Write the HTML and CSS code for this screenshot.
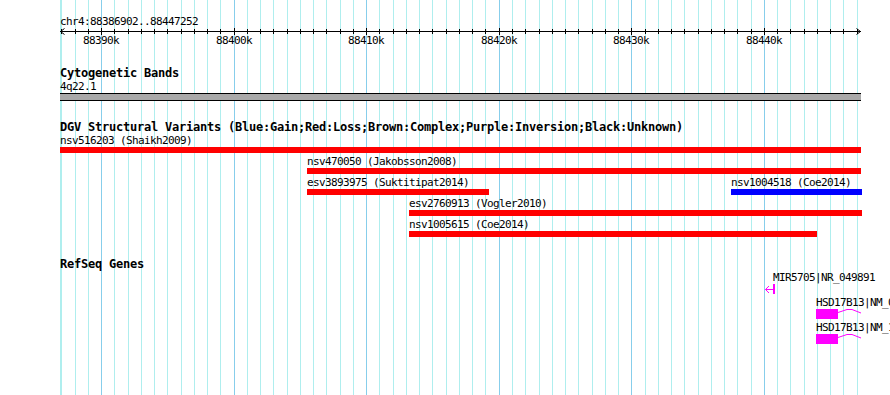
FILE: index.html
```html
<!DOCTYPE html>
<html lang="en">
<head>
<meta charset="utf-8">
<title>GBrowse details</title>
<link rel="stylesheet" href="styles.css">
</head>
<body>
<div class="panel">
  <svg class="grid" width="890" height="395" viewBox="0 0 890 395">
    <g class="minor">
      <rect x="60" width="1" height="395"/><rect x="61" width="1" height="395"/><rect x="75" width="1" height="395"/><rect x="88" width="1" height="395"/>
      <rect x="114" width="1" height="395"/><rect x="128" width="1" height="395"/><rect x="141" width="1" height="395"/><rect x="154" width="1" height="395"/><rect x="167" width="1" height="395"/><rect x="181" width="1" height="395"/><rect x="194" width="1" height="395"/><rect x="207" width="1" height="395"/><rect x="220" width="1" height="395"/>
      <rect x="247" width="1" height="395"/><rect x="260" width="1" height="395"/><rect x="273" width="1" height="395"/><rect x="287" width="1" height="395"/><rect x="300" width="1" height="395"/><rect x="313" width="1" height="395"/><rect x="326" width="1" height="395"/><rect x="340" width="1" height="395"/><rect x="353" width="1" height="395"/>
      <rect x="379" width="1" height="395"/><rect x="393" width="1" height="395"/><rect x="406" width="1" height="395"/><rect x="419" width="1" height="395"/><rect x="432" width="1" height="395"/><rect x="446" width="1" height="395"/><rect x="459" width="1" height="395"/><rect x="472" width="1" height="395"/><rect x="485" width="1" height="395"/>
      <rect x="512" width="1" height="395"/><rect x="525" width="1" height="395"/><rect x="539" width="1" height="395"/><rect x="552" width="1" height="395"/><rect x="565" width="1" height="395"/><rect x="578" width="1" height="395"/><rect x="592" width="1" height="395"/><rect x="605" width="1" height="395"/><rect x="618" width="1" height="395"/>
      <rect x="645" width="1" height="395"/><rect x="658" width="1" height="395"/><rect x="671" width="1" height="395"/><rect x="684" width="1" height="395"/><rect x="698" width="1" height="395"/><rect x="711" width="1" height="395"/><rect x="724" width="1" height="395"/><rect x="737" width="1" height="395"/><rect x="751" width="1" height="395"/>
      <rect x="777" width="1" height="395"/><rect x="790" width="1" height="395"/><rect x="804" width="1" height="395"/><rect x="817" width="1" height="395"/><rect x="830" width="1" height="395"/><rect x="843" width="1" height="395"/><rect x="857" width="1" height="395"/>
    </g>
    <g class="major">
      <rect x="101" width="1" height="395"/><rect x="234" width="1" height="395"/><rect x="366" width="1" height="395"/><rect x="499" width="1" height="395"/><rect x="631" width="1" height="395"/><rect x="764" width="1" height="395"/>
    </g>
  </svg>

  <div class="ruler">
    <div class="seg">chr4:88386902..88447252</div>
    <div class="scale">
      <svg class="scale-svg" width="890" height="8" viewBox="0 0 890 8">
        <g class="ticks">
          <rect x="60" y="3" width="801" height="1"/>
          <rect x="61" y="1" width="1" height="5"/><rect x="75" y="1" width="1" height="5"/><rect x="88" y="1" width="1" height="5"/>
          <rect x="114" y="1" width="1" height="5"/><rect x="128" y="1" width="1" height="5"/><rect x="141" y="1" width="1" height="5"/><rect x="154" y="1" width="1" height="5"/><rect x="167" y="1" width="1" height="5"/><rect x="181" y="1" width="1" height="5"/><rect x="194" y="1" width="1" height="5"/><rect x="207" y="1" width="1" height="5"/><rect x="220" y="1" width="1" height="5"/>
          <rect x="247" y="1" width="1" height="5"/><rect x="260" y="1" width="1" height="5"/><rect x="273" y="1" width="1" height="5"/><rect x="287" y="1" width="1" height="5"/><rect x="300" y="1" width="1" height="5"/><rect x="313" y="1" width="1" height="5"/><rect x="326" y="1" width="1" height="5"/><rect x="340" y="1" width="1" height="5"/><rect x="353" y="1" width="1" height="5"/>
          <rect x="379" y="1" width="1" height="5"/><rect x="393" y="1" width="1" height="5"/><rect x="406" y="1" width="1" height="5"/><rect x="419" y="1" width="1" height="5"/><rect x="432" y="1" width="1" height="5"/><rect x="446" y="1" width="1" height="5"/><rect x="459" y="1" width="1" height="5"/><rect x="472" y="1" width="1" height="5"/><rect x="485" y="1" width="1" height="5"/>
          <rect x="512" y="1" width="1" height="5"/><rect x="525" y="1" width="1" height="5"/><rect x="539" y="1" width="1" height="5"/><rect x="552" y="1" width="1" height="5"/><rect x="565" y="1" width="1" height="5"/><rect x="578" y="1" width="1" height="5"/><rect x="592" y="1" width="1" height="5"/><rect x="605" y="1" width="1" height="5"/><rect x="618" y="1" width="1" height="5"/>
          <rect x="645" y="1" width="1" height="5"/><rect x="658" y="1" width="1" height="5"/><rect x="671" y="1" width="1" height="5"/><rect x="684" y="1" width="1" height="5"/><rect x="698" y="1" width="1" height="5"/><rect x="711" y="1" width="1" height="5"/><rect x="724" y="1" width="1" height="5"/><rect x="737" y="1" width="1" height="5"/><rect x="751" y="1" width="1" height="5"/>
          <rect x="777" y="1" width="1" height="5"/><rect x="790" y="1" width="1" height="5"/><rect x="804" y="1" width="1" height="5"/><rect x="817" y="1" width="1" height="5"/><rect x="830" y="1" width="1" height="5"/><rect x="843" y="1" width="1" height="5"/><rect x="857" y="1" width="1" height="5"/>
          <rect x="101" y="0" width="1" height="7"/><rect x="234" y="0" width="1" height="7"/><rect x="366" y="0" width="1" height="7"/><rect x="499" y="0" width="1" height="7"/><rect x="631" y="0" width="1" height="7"/><rect x="764" y="0" width="1" height="7"/>
        </g>
        <path class="arrow" d="M64.5,0.5 L60.5,3.5 L64.5,6.5 M856.5,0.5 L860.5,3.5 L856.5,6.5"/>
      </svg>
      <span class="tick" style="left:83px">88390k</span>
      <span class="tick" style="left:216px">88400k</span>
      <span class="tick" style="left:348px">88410k</span>
      <span class="tick" style="left:481px">88420k</span>
      <span class="tick" style="left:613px">88430k</span>
      <span class="tick" style="left:746px">88440k</span>
    </div>
  </div>

  <section class="track">
    <div class="title">Cytogenetic Bands</div>
    <div class="seg">4q22.1</div>
    <div class="band"></div>
  </section>

  <section class="track">
    <div class="title">DGV Structural Variants (Blue:Gain;Red:Loss;Brown:Complex;Purple:Inversion;Black:Unknown)</div>
    <div class="lane">
      <div class="feat" style="left:60px"><div class="flabel">nsv516203 (Shaikh2009)</div><div class="bar loss" style="width:801px"></div></div>
    </div>
    <div class="lane">
      <div class="feat" style="left:307px"><div class="flabel">nsv470050 (Jakobsson2008)</div><div class="bar loss" style="width:554px"></div></div>
    </div>
    <div class="lane">
      <div class="feat" style="left:307px"><div class="flabel">esv3893975 (Suktitipat2014)</div><div class="bar loss" style="width:182px"></div></div>
      <div class="feat" style="left:731px"><div class="flabel">nsv1004518 (Coe2014)</div><div class="bar gain" style="width:131px"></div></div>
    </div>
    <div class="lane">
      <div class="feat" style="left:409px"><div class="flabel">esv2760913 (Vogler2010)</div><div class="bar loss" style="width:453px"></div></div>
    </div>
    <div class="lane">
      <div class="feat" style="left:409px"><div class="flabel">nsv1005615 (Coe2014)</div><div class="bar loss" style="width:408px"></div></div>
    </div>
  </section>

  <section class="track refseq">
    <div class="title">RefSeq Genes</div>
    <div class="lane gene">
      <div class="feat" style="left:773px">
        <div class="flabel">MIR5705|NR_049891</div>
        <svg class="mir" width="10" height="10" viewBox="0 0 10 10">
          <rect x="8" y="0" width="2" height="10" fill="#ff00ff"/>
          <path d="M0.5,5.5 H8 M4,2 L0.5,5.5 L4,9" fill="none" stroke="#ff00ff" stroke-width="1"/>
        </svg>
      </div>
    </div>
    <div class="lane gene">
      <div class="feat" style="left:816px">
        <div class="flabel">HSD17B13|NM_001136230</div>
        <div class="glyph"><div class="exon"></div><svg class="intron" width="24" height="10" viewBox="0 0 24 10"><polyline points="0,3.5 9,0.5 14,0.5 23,4" fill="none" stroke="#ff00ff" stroke-width="1"/></svg></div>
      </div>
    </div>
    <div class="lane gene">
      <div class="feat" style="left:816px">
        <div class="flabel">HSD17B13|NM_178135</div>
        <div class="glyph"><div class="exon"></div><svg class="intron" width="24" height="10" viewBox="0 0 24 10"><polyline points="0,3.5 9,0.5 14,0.5 23,4" fill="none" stroke="#ff00ff" stroke-width="1"/></svg></div>
      </div>
    </div>
  </section>
</div>
</body>
</html>
```

FILE: styles.css
```css
html, body {
  margin: 0;
  padding: 0;
  background: #ffffff;
  overflow: hidden;
}

.panel {
  position: relative;
  z-index: 0;
  width: 890px;
  height: 395px;
  overflow: hidden;
  font-family: "DejaVu Sans Mono", "Liberation Mono", monospace;
  font-size: 11px;
  line-height: 13px;
  letter-spacing: -0.6226px;
  color: #000000;
}

.grid {
  position: absolute;
  left: 0;
  top: 0;
  z-index: -1;
  shape-rendering: crispEdges;
}

.grid .minor { fill: #afeeee; }
.grid .major { fill: #87ceeb; }

.ruler {
  padding-top: 15px;
}

.seg {
  padding-left: 60px;
  white-space: nowrap;
}

.scale {
  position: relative;
  height: 19px;
}

.scale-svg {
  position: absolute;
  left: 0;
  top: 0;
}

.scale-svg .ticks {
  fill: #000000;
  shape-rendering: crispEdges;
}

.scale-svg .arrow {
  fill: none;
  stroke: #000000;
  stroke-width: 1;
}

.tick {
  position: absolute;
  top: 6px;
  white-space: nowrap;
}

.track {
  margin-top: 20px;
}

.track.refseq {
  margin-top: 19px;
}

.title {
  padding-left: 60px;
  font-weight: bold;
  font-size: 12px;
  letter-spacing: -0.2246px;
  white-space: nowrap;
}

.band {
  margin-left: 60px;
  width: 801px;
  height: 6px;
  background: #a9a9a9;
  border-top: 1px solid #000000;
  border-bottom: 1px solid #000000;
}

.lane {
  position: relative;
  height: 21px;
}

.lane.gene {
  height: 25px;
}

.feat {
  position: absolute;
  top: 0;
  white-space: nowrap;
}

.flabel {
  white-space: nowrap;
}

.bar {
  height: 6px;
}

.bar.loss { background: #ff0000; }
.bar.gain { background: #0000ff; }

.glyph {
  display: flex;
}

.exon {
  width: 22px;
  height: 10px;
  background: #ff00ff;
}

.intron {
  display: block;
}

.mir {
  display: block;
  margin-left: -8px;
}
```
